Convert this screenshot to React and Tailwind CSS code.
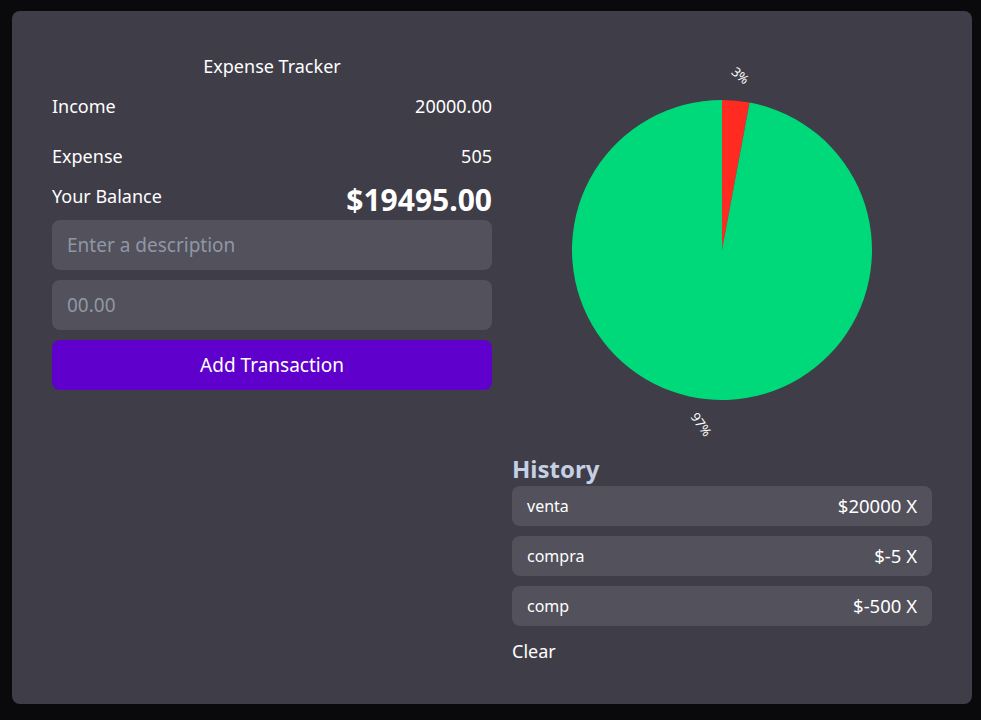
import React from "react";

const font = { fontFamily: '"Noto Sans", "Open Sans", sans-serif' };

function Pie() {
  const cx = 150, cy = 150, r = 150;
  const a = (10.6 * Math.PI) / 180;
  const ex = cx + r * Math.sin(a);
  const ey = cy - r * Math.cos(a);
  return (
    <div className="relative w-[420px] h-[380px]">
      <svg width="300" height="300" viewBox="0 0 300 300" className="absolute left-[60px] top-[49px]">
        <path d={`M${cx} ${cy} L${cx} 0 A${r} ${r} 0 0 1 ${ex} ${ey} Z`} fill="#ff2a22" />
        <path d={`M${cx} ${cy} L${ex} ${ey} A${r} ${r} 0 1 1 ${cx} 0 Z`} fill="#00d97a" />
      </svg>
      <span className="absolute left-[219px] top-[15px] text-[13px] text-white rotate-[40deg]">3%</span>
      <span className="absolute left-[176px] top-[364px] text-[13px] text-white rotate-[55deg]">97%</span>
    </div>
  );
}

export default function App() {
  const items = [
    ["venta", "$20000"],
    ["compra", "$-5"],
    ["comp", "$-500"],
  ];
  return (
    <div className="min-h-[720px] bg-[#0a0a0c] pt-[11px] pl-[12px]" style={font}>
      <div className="w-[960px] h-[693px] rounded-[8px] bg-[#3f3d48] px-[40px] pt-[40px] flex gap-[20px]">
        <div className="w-[440px] flex flex-col">
          <div className="text-center text-white text-[18px] leading-[28px] mt-[1px]">Expense Tracker</div>
          <div className="flex justify-between text-white text-[18px] leading-[28px] mt-[12px]">
            <span>Income</span>
            <span>20000.00</span>
          </div>
          <div className="flex justify-between text-white text-[18px] leading-[28px] mt-[22px]">
            <span>Expense</span>
            <span>505</span>
          </div>
          <div className="flex justify-between items-start text-white mt-[12px] h-[38px]">
            <span className="text-[18px] leading-[28px]">Your Balance</span>
            <span className="text-[30px] leading-[36px] font-bold">$19495.00</span>
          </div>
          <div className="flex flex-col gap-[10px]">
            <input
              placeholder="Enter a description"
              className="h-[50px] rounded-[8px] bg-[#53515c] px-[15px] text-[19px] text-white placeholder:text-[#8f97a6] outline-none"
            />
            <input
              placeholder="00.00"
              className="h-[50px] rounded-[8px] bg-[#53515c] px-[15px] text-[19px] text-white placeholder:text-[#8f97a6] outline-none"
            />
            <button className="h-[50px] rounded-[8px] bg-[#5f00cc] text-white text-[19px]">Add Transaction</button>
          </div>
        </div>
        <div className="w-[420px] flex flex-col">
          <Pie />
          <div className="text-[24px] font-bold text-[#c5d0e4] leading-[32px] mt-[22px] mb-[1px]">History</div>
          <div className="flex flex-col gap-[10px]">
            {items.map(([d, v]) => (
              <div key={d} className="h-[40px] rounded-[8px] bg-[#53515c] px-[15px] flex items-center justify-between text-white">
                <span className="text-[16px]">{d}</span>
                <span className="text-[18.5px]">{v} X</span>
              </div>
            ))}
          </div>
          <div className="text-white text-[18px] leading-[28px] mt-[11px]">Clear</div>
        </div>
      </div>
    </div>
  );
}
